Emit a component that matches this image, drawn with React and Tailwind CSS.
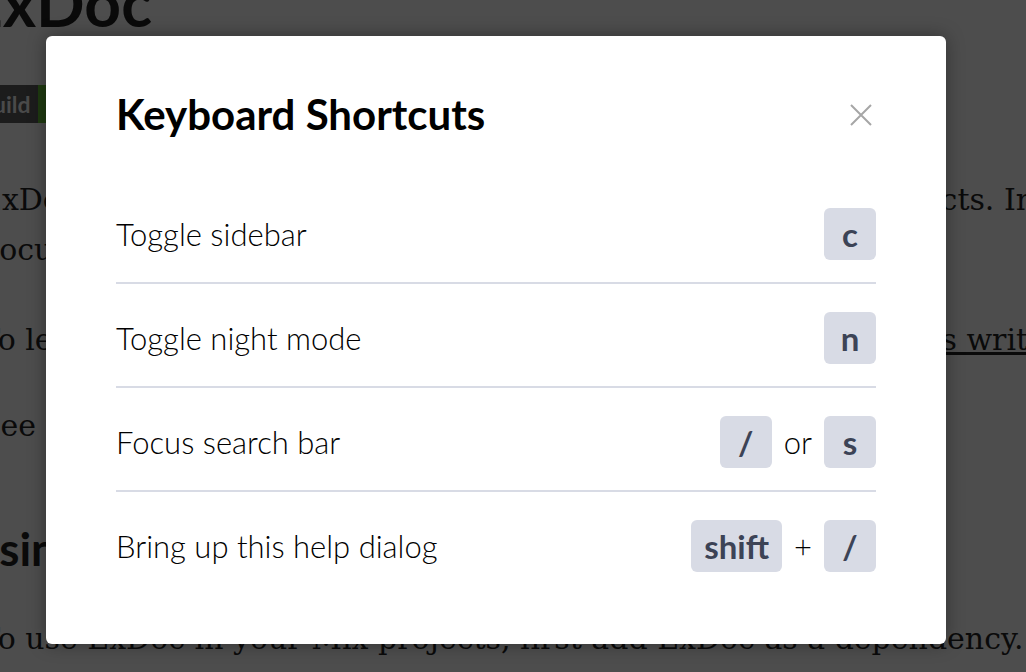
import React from 'react';

const shortcuts = [
  { label: 'Toggle sidebar', keys: [['key', 'c']] },
  { label: 'Toggle night mode', keys: [['key', 'n']] },
  { label: 'Focus search bar', keys: [['key', '/'], ['sep', 'or'], ['key', 's']] },
  { label: 'Bring up this help dialog', keys: [['key', 'shift'], ['sep', '+'], ['key', '/']] },
];

function Key({ children }) {
  return (
    <kbd className="flex h-[52px] min-w-[52px] items-center justify-center rounded-[6px] bg-[#d8dbe5] px-[13px] font-['Lato',sans-serif] text-[33px] font-bold leading-none text-[#3c4356]">
      {children}
    </kbd>
  );
}

function PageBehind() {
  return (
    <div className="ml-[-20px] flex flex-col whitespace-nowrap text-[#0a0a0a]">
      <h1 className="mt-[-29px] ml-[-14px] font-['Lato',sans-serif] text-[64px] font-bold leading-[64px]">ExDoc</h1>

      <div className="mt-[50px] ml-[-6px] flex h-[38px] w-fit">
        <span className="flex items-center bg-[#1c1c1c] pl-[6px] pr-[7px] font-['Lato',sans-serif] text-[23px] font-bold text-[#4a4a4a]">build</span>
        <span className="w-[60px] bg-[#1f3a11]" />
      </div>

      <div className="mt-[52px] font-['DejaVu_Serif',serif] text-[30px] leading-[50px]">
        <p>ExDoc is a tool to generate documentation for your Elixir projects. In case you are</p>
        <p>documentation in action, see the docs.</p>
      </div>

      <p className="mt-[40px] font-['DejaVu_Serif',serif] text-[30px] leading-[50px]">
        To learn more about how to document your projects, see <span className="underline">Elixir's writing documentation</span>.
      </p>

      <p className="mt-[36px] font-['DejaVu_Serif',serif] text-[30px] leading-[50px]">See the documentation for mix docs.</p>

      <h2 className="mt-[68px] ml-[-14px] font-['Lato',sans-serif] text-[46px] font-bold leading-[60px]">Using ExDoc with Mix</h2>

      <p className="mt-[35px] font-['DejaVu_Serif',serif] text-[30px] leading-[50px]">
        To use ExDoc in your Mix projects, first add ExDoc as a dependency.
      </p>
    </div>
  );
}

export default function App() {
  return (
    <div className="relative h-[672px] w-[1026px] overflow-hidden bg-[#4d4d4d]">
      <PageBehind />

      <div
        role="dialog"
        className="absolute left-[46px] top-[36px] h-[608px] w-[900px] rounded-[6px] bg-white px-[70px] pt-[56px] shadow-[0_0_18px_rgba(0,0,0,0.35)]"
      >
        <div className="flex h-[44px] items-center justify-between">
          <h2 className="font-['Lato',sans-serif] text-[42px] font-bold leading-[44px] text-black">Keyboard Shortcuts</h2>
          <button className="mr-[3px] mt-[2px] text-[#a6a6a6]" aria-label="close">
            <svg width="24" height="24" viewBox="0 0 24 24" fill="none" stroke="currentColor" strokeWidth="2">
              <path d="M2 2 L22 22 M22 2 L2 22" />
            </svg>
          </button>
        </div>

        <div className="mt-[44px] flex flex-col">
          {shortcuts.map((s, i) => (
            <div
              key={s.label}
              className={`flex items-center justify-between pt-[28px] pb-[22px] ${
                i < shortcuts.length - 1 ? 'border-b-2 border-[#d8dbe5]' : ''
              }`}
            >
              <span className="font-['Lato',sans-serif] text-[31px] font-light text-black">{s.label}</span>
              <div className="flex items-center gap-3">
                {s.keys.map(([kind, v], j) =>
                  kind === 'key' ? (
                    <Key key={j}>{v}</Key>
                  ) : (
                    <span key={j} className="font-['Lato',sans-serif] text-[31px] font-light text-black">{v}</span>
                  )
                )}
              </div>
            </div>
          ))}
        </div>
      </div>
    </div>
  );
}
